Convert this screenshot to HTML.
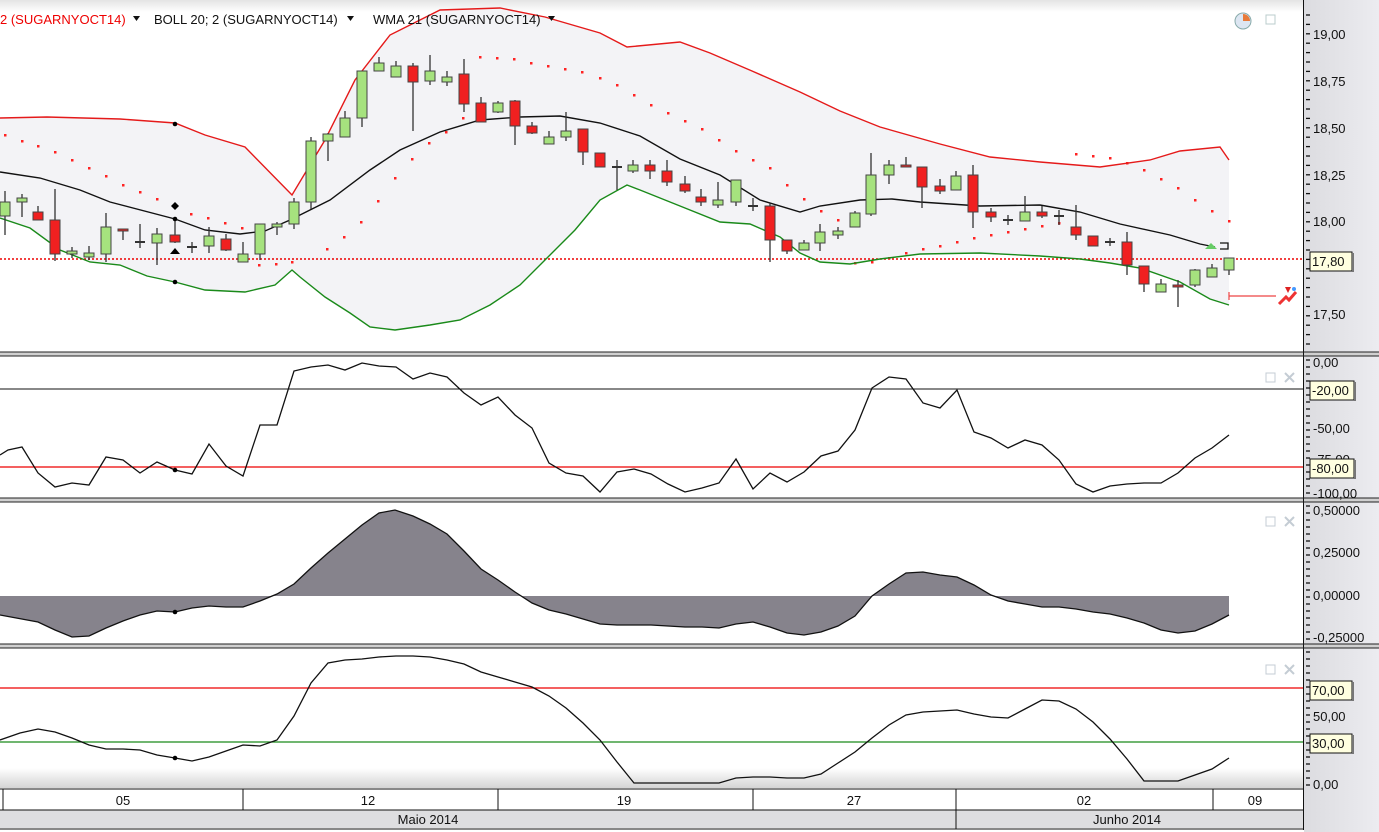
<!DOCTYPE html>
<html><head><meta charset="utf-8"><style>
html,body{margin:0;padding:0;background:#fff;width:1379px;height:832px;overflow:hidden}
svg{display:block}
text{font-family:"Liberation Sans",Arial,sans-serif;font-size:13px;fill:#111}
</style></head><body>
<svg id="s" width="1379" height="832" viewBox="0 0 1379 832" xmlns="http://www.w3.org/2000/svg">
<defs>
<linearGradient id="tg" x1="0" y1="0" x2="0" y2="1"><stop offset="0" stop-color="#e4e4e4"/><stop offset="1" stop-color="#fff"/></linearGradient>
<linearGradient id="bg" x1="0" y1="0" x2="0" y2="1"><stop offset="0" stop-color="#fff"/><stop offset="1" stop-color="#d4d4d4"/></linearGradient>
<linearGradient id="ag" x1="0" y1="0" x2="1" y2="0"><stop offset="0" stop-color="#dcdce0"/><stop offset="1" stop-color="#ececf0"/></linearGradient>
</defs>
<rect x="0" y="0" width="1303" height="12" fill="url(#tg)"/>
<rect x="0" y="768" width="1303" height="20" fill="url(#bg)"/>
<g id="g"></g>
</svg>
<script>
var S=document.getElementById('g'),h='';
function P(a){return a.map(function(p){return p[0]+','+p[1]}).join(' ')}
var up=[[0,118],[47,117],[120,119],[175,123],[205,135],[245,147],[292,195],[325,140],[355,80],[390,35],[440,10],[500,8],[545,17],[600,33],[627,47],[680,42],[710,53],[752,71],[800,92],[840,111],[880,127],[940,144],[990,157],[1040,162],[1100,167],[1150,160],[1180,151],[1220,147],[1229,160]];
var lo=[[0,218],[30,228],[60,250],[90,262],[120,265],[147,276],[175,282],[205,290],[245,292],[275,285],[292,270],[300,277],[325,297],[350,313],[370,327],[395,330],[430,325],[460,320],[490,305],[520,285],[545,260],[575,230],[600,200],[627,185],[640,190],[680,206],[720,222],[750,224],[780,237],[800,253],[820,262],[850,264],[880,259],[920,254],[980,253],[1040,256],[1080,259],[1110,263],[1140,268],[1180,282],[1210,299],[1229,305]];
var wm=[[0,172],[40,178],[80,190],[110,202],[175,219],[205,230],[240,234],[265,231],[290,220],[330,200],[370,170],[400,150],[440,132],[480,120],[520,117],[560,116],[600,123],[640,136],[680,159],[720,175],[760,200],[800,212],[820,206],[860,200],[892,199],[920,202],[980,206],[1040,205],[1080,212],[1120,224],[1170,235],[1200,244],[1215,247]];
h+='<polygon points="'+P(up)+' '+P(lo.slice().reverse())+'" fill="#f3f3f6"/>';
h+='<line x1="0" y1="259" x2="1303" y2="259" stroke="#e00" stroke-width="1.5" stroke-dasharray="2,2"/>';
var sar=[[5,135],[22,141],[38,146],[55,152],[72,160],[89,168],[106,176],[123,185],[140,192],[157,199],[191,214],[208,218],[225,223],[242,228],[259,265],[276,264],[292,262],[327,249],[344,237],[361,222],[378,201],[395,178],[412,159],[429,143],[446,132],[463,118],[480,57],[497,58],[514,59],[531,63],[548,66],[565,69],[582,72],[600,78],[617,85],[634,95],[651,105],[668,113],[685,121],[702,129],[719,140],[736,151],[753,160],[770,168],[787,185],[804,199],[821,211],[838,220],[855,263],[872,262],[889,258],[906,253],[923,249],[940,246],[957,242],[974,238],[991,235],[1008,232],[1025,229],[1042,226],[1059,223],[1076,154],[1093,156],[1110,158],[1127,163],[1144,170],[1161,179],[1178,188],[1195,200],[1212,211],[1229,221]];
sar.forEach(function(p){h+='<rect x="'+(p[0]-1)+'" y="'+(p[1]-1)+'" width="2.5" height="2.5" fill="#f22"/>'});
h+='<polyline points="'+P(up)+'" fill="none" stroke="#e51a1a" stroke-width="1.4"/>';
h+='<polyline points="'+P(lo)+'" fill="none" stroke="#1a8a1a" stroke-width="1.4"/>';
h+='<polyline points="'+P(wm)+'" fill="none" stroke="#111" stroke-width="1.4"/>';
var C=[[5,202,216,191,235,'g'],[22,198,202,194,217,'g'],[38,212,220,206,220,'r'],[55,220,254,189,261,'r'],[72,251,254,247,258,'g'],[89,253,257,246,260,'g'],[106,227,254,213,262,'g'],[123,229,231,229,240,'r'],[140,242,242,224,248,'c'],[157,234,243,228,265,'g'],[175,235,242,220,243,'r'],[192,247,247,242,253,'c'],[209,236,246,227,253,'g'],[226,239,250,234,251,'r'],[243,254,262,242,262,'g'],[260,224,254,224,260,'g'],[277,224,227,222,235,'g'],[294,202,224,198,229,'g'],[311,141,202,137,209,'g'],[328,134,141,133,161,'g'],[345,118,137,111,137,'g'],[362,71,118,71,127,'g'],[379,63,71,57,71,'g'],[396,66,77,61,77,'g'],[413,66,82,63,131,'r'],[430,71,81,55,85,'g'],[447,77,82,71,86,'g'],[464,74,104,59,112,'r'],[481,103,122,97,122,'r'],[498,103,112,101,113,'g'],[515,101,126,100,145,'r'],[532,126,133,122,134,'r'],[549,137,144,131,144,'g'],[566,131,137,112,141,'g'],[583,129,152,129,165,'r'],[600,153,167,153,167,'r'],[617,167,167,160,190,'c'],[633,165,171,160,173,'g'],[650,165,171,160,179,'r'],[667,171,182,160,186,'r'],[685,184,191,176,193,'r'],[701,197,202,189,206,'r'],[718,200,205,182,208,'g'],[736,180,202,180,206,'g'],[753,206,206,198,211,'c'],[770,206,240,203,262,'r'],[787,240,251,240,254,'r'],[804,243,250,240,250,'g'],[820,232,243,224,251,'g'],[838,231,235,227,239,'g'],[855,213,227,211,227,'g'],[871,175,214,153,216,'g'],[889,165,175,160,184,'g'],[906,165,167,157,167,'r'],[922,167,187,167,208,'r'],[940,186,191,179,194,'r'],[956,176,190,171,190,'g'],[973,175,212,165,228,'r'],[991,212,217,208,222,'r'],[1008,220,220,215,225,'c'],[1025,212,221,196,221,'g'],[1042,212,216,206,218,'r'],[1059,216,216,210,225,'c'],[1076,227,235,205,240,'r'],[1093,236,246,236,246,'r'],[1110,242,242,238,246,'c'],[1127,242,265,232,275,'r'],[1144,266,284,266,292,'r'],[1161,284,292,279,292,'g'],[1178,285,287,280,307,'r'],[1195,270,285,269,287,'g'],[1212,268,277,264,277,'g'],[1229,258,270,258,275,'g']];
C.forEach(function(c){
 h+='<line x1="'+c[0]+'" y1="'+c[3]+'" x2="'+c[0]+'" y2="'+c[4]+'" stroke="#333" stroke-width="1.3"/>';
 if(c[5]=='c'){h+='<line x1="'+(c[0]-5)+'" y1="'+c[1]+'" x2="'+(c[0]+5)+'" y2="'+c[1]+'" stroke="#333" stroke-width="2"/>';return;}
 var hh=Math.max(c[2]-c[1],2);
 h+='<rect x="'+(c[0]-5)+'" y="'+c[1]+'" width="10" height="'+hh+'" fill="'+(c[5]=='g'?'#a6e27e':'#f02020')+'" stroke="#444" stroke-width="1"/>';
});
h+='<path d="M175,202 l4,4 -4,4 -4,-4z" fill="#000"/><path d="M170,254 h10 l-5,-6z" fill="#000"/>';
[[175,124],[175,219],[175,282]].forEach(function(p){h+='<circle cx="'+p[0]+'" cy="'+p[1]+'" r="2.3" fill="#000"/>'});
h+='<path d="M1205,249 l6,-6 6,6z" fill="#6c6"/><path d="M1220,243 h8 v6 h-8" fill="none" stroke="#111" stroke-width="1.3"/>';
h+='<line x1="1229" y1="296" x2="1276" y2="296" stroke="#e44" stroke-width="1.2"/><line x1="1229" y1="292" x2="1229" y2="300" stroke="#e44" stroke-width="1.2"/>';
h+='<path d="M1279,304 l7,-7 3,3 7,-8" fill="none" stroke="#e33" stroke-width="3"/><path d="M1285,287 h6 l-3,6z" fill="#d22"/><circle cx="1294" cy="289" r="2" fill="#49f"/>';
h+='<circle cx="1243" cy="21" r="8" fill="#dde6f2" stroke="#8aa" stroke-width="1"/><path d="M1243,21 v-7 a7,7 0 0 1 7,7z" fill="#e87a3a"/><rect x="1266" y="15" width="9" height="9" fill="none" stroke="#bcc" stroke-width="1"/>';
h+='<text x="0" y="24" style="fill:#e00">2 (SUGARNYOCT14)</text><path d="M133,16 h7 l-3.5,5z" fill="#111"/>';
h+='<text x="154" y="24">BOLL 20; 2 (SUGARNYOCT14)</text><path d="M347,16 h7 l-3.5,5z" fill="#111"/>';
h+='<text x="373" y="24">WMA 21 (SUGARNYOCT14)</text><path d="M548,16 h7 l-3.5,5z" fill="#111"/>';
[352,498,644].forEach(function(y){h+='<rect x="0" y="'+y+'" width="1379" height="4" fill="#d0d0d0"/><line x1="0" y1="'+y+'" x2="1379" y2="'+y+'" stroke="#222"/><line x1="0" y1="'+(y+4)+'" x2="1379" y2="'+(y+4)+'" stroke="#222"/>'});
h+='<line x1="0" y1="389" x2="1303" y2="389" stroke="#111"/><line x1="0" y1="467" x2="1303" y2="467" stroke="#e00" stroke-width="1.2"/>';
var w=[[0,455],[8,450],[22,447],[38,473],[55,487],[72,483],[89,485],[106,457],[123,460],[140,473],[157,462],[175,470],[192,474],[209,444],[226,466],[243,476],[260,425],[277,425],[294,371],[311,367],[328,365],[345,370],[362,363],[379,366],[396,367],[413,379],[430,373],[447,377],[464,393],[481,405],[498,397],[515,415],[532,428],[549,463],[566,473],[583,476],[600,492],[617,472],[634,469],[651,474],[668,484],[685,492],[702,488],[719,483],[736,459],[753,489],[770,473],[787,482],[804,472],[821,456],[838,451],[855,430],[872,388],[889,377],[906,379],[923,403],[940,408],[957,390],[974,432],[991,438],[1008,448],[1025,440],[1042,445],[1059,460],[1076,484],[1093,492],[1110,486],[1127,484],[1144,483],[1161,483],[1178,473],[1195,458],[1212,448],[1229,435]];
h+='<polyline points="'+P(w)+'" fill="none" stroke="#111" stroke-width="1.3"/><circle cx="175" cy="470" r="2.3" fill="#000"/>';
var a=[[0,615],[38,622],[55,630],[72,637],[89,636],[106,628],[123,621],[140,615],[157,611],[175,612],[192,608],[209,606],[226,607],[243,607],[260,601],[277,594],[294,584],[311,568],[328,553],[345,539],[362,525],[379,513],[395,510],[413,516],[430,524],[447,534],[464,551],[481,569],[498,580],[515,592],[532,603],[549,610],[566,614],[583,619],[600,624],[617,625],[634,625],[651,625],[668,626],[685,627],[702,627],[719,628],[736,624],[753,622],[770,627],[787,633],[804,635],[821,632],[838,626],[855,616],[872,596],[889,584],[906,573],[923,572],[940,575],[957,577],[974,585],[991,595],[1008,601],[1025,604],[1042,607],[1059,607],[1076,609],[1093,612],[1110,614],[1127,618],[1144,623],[1161,630],[1178,633],[1195,631],[1212,624],[1229,615]];
h+='<polygon points="0,596 '+P(a)+' 1229,596" fill="#86838c"/><polyline points="'+P(a)+'" fill="none" stroke="#111" stroke-width="1.3"/><circle cx="175" cy="612" r="2.3" fill="#000"/>';
h+='<line x1="0" y1="688" x2="1303" y2="688" stroke="#e00" stroke-width="1.2"/><line x1="0" y1="742" x2="1303" y2="742" stroke="#1a8a1a" stroke-width="1.2"/>';
var r=[[0,740],[20,733],[38,729],[55,732],[72,738],[89,745],[106,749],[123,749],[140,750],[157,755],[175,758],[192,761],[209,757],[226,751],[243,745],[260,746],[277,740],[294,716],[311,683],[328,663],[345,660],[362,659],[379,657],[396,656],[413,656],[430,657],[447,660],[464,664],[481,672],[498,677],[515,682],[532,687],[549,696],[566,708],[583,723],[600,740],[617,762],[634,783],[651,783],[668,783],[685,783],[702,783],[719,783],[736,778],[753,777],[770,777],[787,778],[804,778],[821,774],[838,763],[855,752],[872,738],[889,725],[906,715],[923,712],[940,711],[957,710],[974,714],[991,717],[1008,718],[1025,709],[1042,700],[1059,701],[1076,709],[1093,722],[1110,739],[1127,759],[1144,781],[1161,781],[1178,781],[1195,775],[1212,769],[1229,758]];
h+='<polyline points="'+P(r)+'" fill="none" stroke="#111" stroke-width="1.3"/><circle cx="175" cy="758" r="2.3" fill="#000"/>';
[378,522,670].forEach(function(y){h+='<rect x="1266" y="'+(y-5)+'" width="9" height="9" fill="none" stroke="#c4ccd4"/><path d="M1285,'+(y-5)+' l9,9 M1294,'+(y-5)+' l-9,9" stroke="#c4ccd4" stroke-width="2"/>'});
h+='<rect x="0" y="789" width="1303" height="21" fill="#fff"/><rect x="0" y="810" width="1303" height="20" fill="#dedee0"/>';
h+='<line x1="0" y1="789" x2="1303" y2="789" stroke="#111"/><line x1="0" y1="810" x2="1303" y2="810" stroke="#111"/><line x1="0" y1="829" x2="1379" y2="829" stroke="#888" stroke-width="2"/>';
[3,243,498,753,956,1213].forEach(function(x){h+='<line x1="'+x+'" y1="789" x2="'+x+'" y2="810" stroke="#111"/>'});
h+='<line x1="956" y1="810" x2="956" y2="829" stroke="#111"/>';
[['05',123],['12',368],['19',624],['27',854],['02',1084],['09',1255]].forEach(function(d){h+='<text x="'+d[1]+'" y="805" text-anchor="middle">'+d[0]+'</text>'});
h+='<text x="428" y="824" text-anchor="middle">Maio 2014</text><text x="1127" y="824" text-anchor="middle">Junho 2014</text>';
h+='<rect x="1304" y="0" width="75" height="832" fill="url(#ag)"/><line x1="1303.5" y1="0" x2="1303.5" y2="830" stroke="#111"/>';
[352,498,644].forEach(function(y){h+='<rect x="1304" y="'+y+'" width="75" height="4" fill="#d0d0d0"/><line x1="1303" y1="'+y+'" x2="1379" y2="'+y+'" stroke="#222"/><line x1="1303" y1="'+(y+4)+'" x2="1379" y2="'+(y+4)+'" stroke="#222"/>'});
function ticks(y0,y1,st){for(var y=y0;y<y1;y+=st)h+='<line x1="1306" y1="'+y+'" x2="1310" y2="'+y+'" stroke="#111" stroke-width="1.3"/>'}
ticks(15,350,9.4);ticks(360,497,7);ticks(506,643,7);ticks(652,787,7);
function lab(t,y){h+='<text x="1313" y="'+(y+5)+'">'+t+'</text>'}
function box(t,y,w){h+='<rect x="1310" y="'+(y-9)+'" width="'+w+'" height="19" fill="#ffffe0" stroke="#111"/><rect x="'+(1310+w)+'" y="'+(y-8)+'" width="2" height="19" fill="#777"/><text x="1312" y="'+(y+5)+'">'+t+'</text>'}
lab('19,00',34);lab('18,75',81);lab('18,50',128);lab('18,25',175);lab('18,00',221);lab('17,50',314);
box('17,80',261,42);
lab('0,00',362);lab('-50,00',428);lab('-75,00',459);lab('-100,00',493);box('-20,00',390,44);box('-80,00',468,44);
lab('0,50000',510);lab('0,25000',552);lab('0,00000',595);lab('-0,25000',637);
lab('50,00',716);lab('0,00',784);box('70,00',690,42);box('30,00',743,42);
S.innerHTML=h;
</script>
</body></html>
